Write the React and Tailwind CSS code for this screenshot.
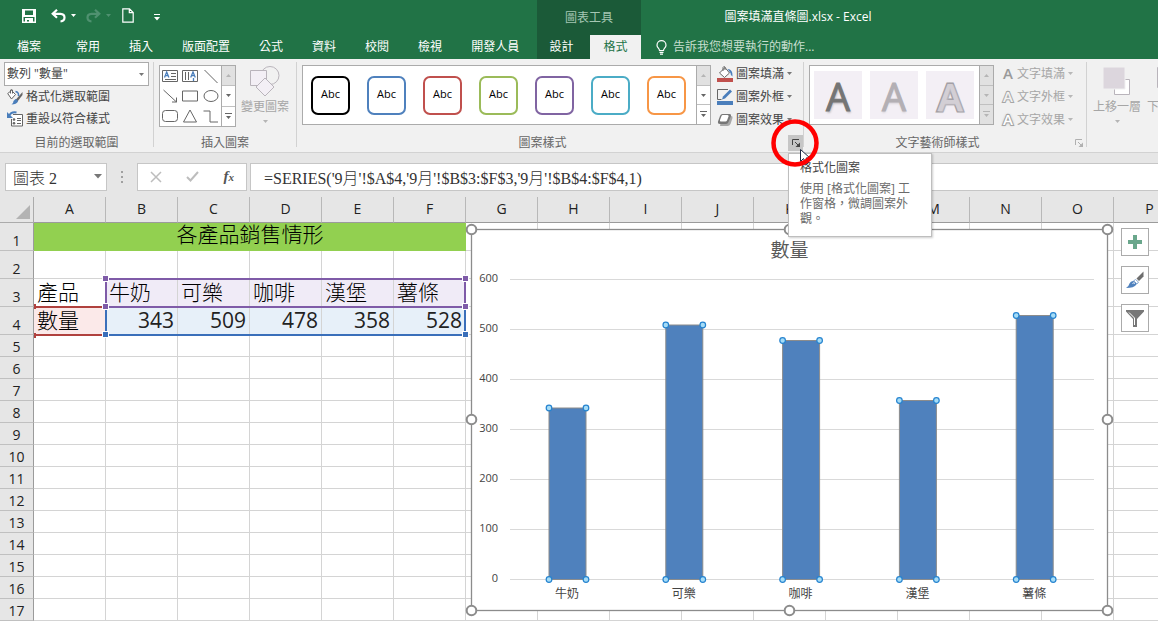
import { useState } from "react";

const TABS = ["常用", "插入", "版面配置", "公式", "資料", "校閱", "檢視", "開發人員"];
const COLUMNS = ["A", "B", "C", "D", "E", "F", "G", "H", "I", "J", "K", "L", "M", "N", "O", "P"];
const ROWS = Array.from({ length: 17 }, (_, i) => i + 1);

const DATA = [
  { name: "牛奶", value: 343 },
  { name: "可樂", value: 509 },
  { name: "咖啡", value: 478 },
  { name: "漢堡", value: 358 },
  { name: "薯條", value: 528 },
];

const SHAPE_STYLES = [
  "border-black",
  "border-[#4f81bd]",
  "border-[#c0504d]",
  "border-[#9bbb59]",
  "border-[#8064a2]",
  "border-[#4bacc6]",
  "border-[#f79646]",
];

const Caret = ({ className = "text-[#777]" }) => (
  <svg width="5" height="3" viewBox="0 0 5 3" className={`shrink-0 ${className}`}>
    <path d="M0 0h5L2.500 3z" fill="currentColor" />
  </svg>
);

const Separator = () => <div className="w-px shrink-0 mt-[3px] mb-[5px] bg-[#d2d2d2]" />;

/* ---------- Title bar and tabs ---------- */

const QuickAccess = () => (
  <div className="flex items-center h-[35px] pl-[22px] pb-1 text-white">
    <button aria-label="儲存檔案">
      <svg width="14" height="14" viewBox="0 0 14 14" fill="currentColor">
        <path d="M0 0h14v14H0z" />
        <path d="M3 1.500h8V6H3zM1.500 8h11v4.500h-11z" fill="#217346" />
        <path d="M3 9h8v4H7v-2H5v2H3z" />
      </svg>
    </button>
    <button aria-label="復原" className="flex items-center gap-[5px] ml-[15px]">
      <svg width="15" height="14" viewBox="0 0 15 14" fill="none" stroke="currentColor" strokeWidth="2.200">
        <path d="M6 .8 1.700 4.800 6 8.800M2 4.800h7.500Q13.500 5 13.500 8.500T9.500 12.500" />
      </svg>
      <Caret className="text-white" />
    </button>
    <button aria-label="取消復原" disabled className="flex items-center gap-[5px] ml-[10px] text-[#4f9170]">
      <svg width="15" height="14" viewBox="0 0 15 14" fill="none" stroke="currentColor" strokeWidth="2.200">
        <path d="m9 .8 4.300 4L9 8.800M13 4.800H5.500Q1.500 5 1.500 8.500T5.500 12.500" />
      </svg>
      <Caret className="text-[#4f9170]" />
    </button>
    <button aria-label="開新檔案" className="ml-[11px]">
      <svg width="12" height="15" viewBox="0 0 12 15" fill="none" stroke="currentColor" strokeWidth="1.200">
        <path d="M.8.8h6.700L11.200 4.500v9.700H.8zM7.300 1v3.700h3.700" />
      </svg>
    </button>
    <button aria-label="自訂快速存取工具列" className="ml-[20px] pt-1">
      <svg width="6" height="7" viewBox="0 0 6 7" fill="currentColor">
        <path d="M0 0h6v1H0zM0 3h6L3 6.500z" />
      </svg>
    </button>
  </div>
);

const TitleBar = () => (
  <header className="flex h-[59px] shrink-0 bg-[#217346] text-white text-[12px] leading-4">
    <div className="w-[537px] shrink-0">
      <QuickAccess />
      <nav className="flex items-center h-6 pl-[17px] whitespace-nowrap">
        <button className="mr-[35px]">檔案</button>
        <div className="flex gap-[29px]">
          {TABS.map((tab) => (
            <button key={tab}>{tab}</button>
          ))}
        </div>
      </nav>
    </div>
    <div className="flex flex-col w-[104px] shrink-0 bg-[#1b5a38]">
      <div className="flex items-center justify-center h-[35px] text-[#a5c7b3]">圖表工具</div>
      <div className="flex flex-1">
        <button className="w-[53px] pr-1 pb-px">設計</button>
        <button className="flex-1 pb-px bg-[#f1f1f1] text-[#217346]">格式</button>
      </div>
    </div>
    <div className="flex-1 min-w-0">
      <h1 className="h-[35px] pt-[9px] pr-[203px] text-center whitespace-nowrap">圖案填滿直條圖.xlsx - Excel</h1>
      <button className="flex items-center gap-[6px] h-6 pl-[15px] text-[#c8dfd0] whitespace-nowrap">
        <svg width="11" height="15" viewBox="0 0 11 15" fill="none" stroke="#fff" strokeWidth="1.2">
          <path d="M3.500 10.500C3.500 8.500 1 7.800 1 5.200a4.500 4.500 0 0 1 9 0c0 2.600-2.500 3.300-2.500 5.300zM3.500 12.300h4M4 14.200h3" />
        </svg>
        告訴我您想要執行的動作...
      </button>
    </div>
  </header>
);

/* ---------- Ribbon ---------- */

const Launcher = ({ className, label }) => (
  <button aria-label={label} className={`flex items-center justify-center w-[15px] h-4 shrink-0 ${className}`}>
    <svg width="8" height="8" viewBox="0 0 8 8" fill="none" stroke="currentColor">
      <path d="M.5 6V.5H7M3 3l3 3" />
      <path d="M8 3.500V8H3.500z" fill="currentColor" stroke="none" />
    </svg>
  </button>
);

const Group = ({ title, className = "", children, launcher }) => (
  <section className={`flex flex-col shrink-0 pt-[3px] ${className}`}>
    <div className="flex h-[73px]">{children}</div>
    <div className="flex h-4">
      <h2 className="flex-1 text-center text-[#666]">{title}</h2>
      {launcher}
    </div>
  </section>
);

const GalleryScroll = ({ disabled }) => {
  const off = "bg-[#e1e1e1] text-[#b5b5b5]";
  const on = disabled ? off : "bg-white text-[#666]";
  return (
    <div className="flex flex-col w-[14px] shrink-0 border-l border-[#ababab] divide-y divide-[#c0c0c0]">
      <button aria-label="上一列" disabled className={`flex flex-1 items-center justify-center ${off}`}>
        <svg width="5" height="3" viewBox="0 0 5 3"><path d="M0 3h5L2.500 0z" fill="currentColor" /></svg>
      </button>
      <button aria-label="下一列" disabled={disabled} className={`flex flex-1 items-center justify-center ${on}`}>
        <svg width="5" height="3" viewBox="0 0 5 3"><path d="M0 0h5L2.500 3z" fill="currentColor" /></svg>
      </button>
      <button aria-label="其他" disabled={disabled} className={`flex flex-1 items-center justify-center ${on}`}>
        <svg width="7" height="7" viewBox="0 0 7 7"><path d="M0 0h7v1H0zM1 3h5L3.500 6z" fill="currentColor" /></svg>
      </button>
    </div>
  );
};

const IconButton = ({ icon, children, caret, className = "", disabled }) => (
  <button disabled={disabled} className={`flex items-center gap-[3px] whitespace-nowrap ${className}`}>
    {icon}
    <span>{children}</span>
    {caret && <Caret className={disabled ? "text-[#b8b8b8]" : "text-[#777]"} />}
  </button>
);

const FormatSelectionIcon = () => (
  <svg width="16" height="16" viewBox="0 0 16 16" fill="none">
    <path d="M.7 4.500 4.500 1.500l4 4-4 4.500z" fill="#fff" stroke="#666" />
    <path d="M3.500 4.500V1Q4.500 0 5.500 1v3.500" stroke="#666" />
    <path d="M15.500 3 8.500 11l2 1.500L15.500 6z" fill="#666" />
    <path d="M8.500 10q2 0 2.500 2.500Q9.500 15.500 4.500 15.500 6.500 14 6.500 12z" fill="#4a7ebb" />
    <path d="M8.500 2.500Q12 3 11.500 7" stroke="#4a7ebb" strokeWidth="1.500" />
  </svg>
);

const ResetIcon = () => (
  <svg width="16" height="16" viewBox="0 0 16 16" fill="none">
    <path d="M6 3.500h9.500v11.500h-11V8" stroke="#666" fill="#fff" />
    <path d="M2 5Q4 .5 9.500 1.500" stroke="#4a7ebb" strokeWidth="2" />
    <path d="M0 1v6h6z" fill="#4a7ebb" />
    <circle cx="7" cy="8.500" r="1.300" fill="#666" />
    <circle cx="7" cy="12.300" r="1.300" fill="#666" />
    <path d="M10 7.500h4M10 9.500h4M10 12.500h4" stroke="#666" />
  </svg>
);

const SHAPE_ICONS = [
  { name: "文字方塊", draw: <><path d="M2.500 4.500h15v11h-15zM11 7.500h5M11 10.500h5M5 13.500h11" /><path d="M4.500 11.500 6.700 6l2.200 5.500M5.200 9.700h3" stroke="#4a7ebb" strokeWidth="1.300" /></> },
  { name: "垂直文字方塊", draw: <><path d="M2.500 4.500h15v11h-15zM5.500 6v8M8.500 6v8" /><path d="M10.700 11.500 13 6l2.300 5.500M11.500 9.700h3M13.500 12v3" stroke="#4a7ebb" strokeWidth="1.300" /></> },
  { name: "線條", draw: <path d="m3.500 4 13 13" /> },
  { name: "箭號", draw: <path d="m3.500 4 13 12M16.500 11.500V16H12" /> },
  { name: "矩形", draw: <path d="M2.500 5h15v10h-15z" /> },
  { name: "橢圓", draw: <ellipse cx="10" cy="10" rx="7" ry="5.500" /> },
  { name: "圓角矩形", draw: <rect x="2.500" y="4.500" width="15" height="11" rx="3" /> },
  { name: "三角形", draw: <path d="m10 4 6.500 12h-13z" /> },
  { name: "肘形接點", draw: <path d="M2.500 5H9v11h8" /> },
];

const FillIcon = () => (
  <svg width="16" height="16" viewBox="0 0 16 16" fill="none">
    <path d="M2.500 7 8 1.500l4.500 5.500L7.500 11.500z" fill="#fff" stroke="#666" />
    <path d="M6 5V1.500Q6.500 0 8 1v3" stroke="#666" />
    <path d="M10.500 3q5.500 0 5 7.500-2-.5-2-3.500z" fill="#4a7ebb" />
    <path d="M0 12h16v4H0z" fill="#c0504d" />
  </svg>
);

const OutlineIcon = () => (
  <svg width="16" height="16" viewBox="0 0 16 16" fill="none">
    <path d="M11 .5H.5v10h4" stroke="#666" />
    <path d="m5 10.500 1-3L13 .5 15 2.500l-7 7z" fill="#4a7ebb" />
    <path d="M0 12h16v4H0z" fill="#4a7ebb" />
  </svg>
);

const EffectsIcon = () => (
  <svg width="16" height="16" viewBox="0 0 16 16">
    <path d="M5 4h9q2 0 1.500 2L13.500 12q-1 2-3 2H3z" fill="#a8a8a8" />
    <path d="M5.500 2h7q2 0 1.500 2L11.500 10q-.7 2-2.500 2H3Q.5 12 1 9.500l2-5.500q.7-2 2.500-2z" fill="#777" />
    <path d="M5.800 3h4.700q1.500 0 1 1.500L10 8.500q-.5 1-1.500 1H4q-1.500 0-1-1.500L4.500 4q.4-1 1.300-1z" fill="#fff" />
  </svg>
);

const ScreenTip = () => (
  <div role="tooltip" className="absolute left-[491px] top-[94px] z-20 w-[144px] h-[84px] border border-[#bebebe] bg-white pl-[11px] pr-[18px] pt-[6px] shadow-[1px_1px_2px_rgba(0,0,0,0.2)]">
    <p className="text-[#444]">格式化圖案</p>
    <p className="mt-[5px] leading-[15px] text-[#6b6b6b]">使用 [格式化圖案] 工作窗格，微調圖案外觀。</p>
  </div>
);

const ClickMarker = () => (
  <svg width="50" height="50" viewBox="0 0 50 50" fill="none" className="absolute left-[473px] top-[59px] z-30 pointer-events-none">
    <path d="M30.500 31.500v12l3-3 2.500 5.500 2.500-1-2.500-5h4z" fill="#fff" stroke="#1f2a44" />
    <circle cx="25" cy="25" r="21.500" stroke="#f00" strokeWidth="4.500" />
  </svg>
);

const WordArtLetter = ({ className }) => (
  <span className={`w-3 text-center text-[15px] leading-4 font-semibold pb-[2px] ${className}`}>A</span>
);

const Ribbon = () => {
  const [element, setElement] = useState('數列 "數量"');

  return (
    <div className="flex h-[94px] shrink-0 border-b border-[#d2d2d2] bg-[#f1f1f1] text-[12px] leading-4 text-[#444]">
      <Group title="目前的選取範圍" className="w-[153px]">
        <div className="flex flex-col w-full px-1">
          <div className="flex items-center h-6 border border-[#ababab] bg-white pr-1">
            <select
              aria-label="圖表項目"
              value={element}
              onChange={(e) => setElement(e.target.value)}
              className="flex-1 min-w-0 appearance-none bg-transparent pl-[2px] outline-none"
            >
              <option>數列 "數量"</option>
            </select>
            <Caret />
          </div>
          <IconButton icon={<FormatSelectionIcon />} className="h-[22px] pl-[3px]">格式化選取範圍</IconButton>
          <IconButton icon={<ResetIcon />} className="h-[22px] pl-[3px]">重設以符合樣式</IconButton>
        </div>
      </Group>
      <Separator />

      <Group title="插入圖案" className="w-[142px]">
        <div className="flex mt-[3px] ml-[5px] w-[77px] h-[62px] border border-[#ababab] bg-white">
          <div className="grid grid-cols-3 flex-1">
            {SHAPE_ICONS.map((shape) => (
              <button key={shape.name} aria-label={shape.name}>
                <svg width="20" height="20" viewBox="0 0 20 20" fill="none" stroke="#666">{shape.draw}</svg>
              </button>
            ))}
          </div>
          <GalleryScroll />
        </div>
        <button disabled className="flex flex-1 flex-col items-center pt-1 pr-[2px] text-[#a6a6a6]">
          <svg width="30" height="31" viewBox="0 0 30 31" fill="#f3eff5" stroke="#b9b4bb">
            <circle cx="20" cy="9.500" r="9" fill="none" />
            <path d="M.5 4.500h16v15H.5z" />
            <path d="m15 12 9 9-9 9-9-9z" />
          </svg>
          <span className="mt-[2px]">變更圖案</span>
          <Caret className="mt-[5px] text-[#b5b5b5]" />
        </button>
      </Group>
      <Separator />

      <div className="relative flex shrink-0">
        <Group
          title="圖案樣式"
          className="w-[506px]"
          launcher={<Launcher label="格式化圖案" className="bg-[#c6c6c6] text-[#444]" />}
        >
          <div className="flex mt-[3px] ml-[5px] w-[409px] h-[60px] border border-[#ababab] bg-white">
            <div className="flex flex-1 items-center gap-[17px] pl-2">
              {SHAPE_STYLES.map((style) => (
                <button key={style} className={`size-[39px] shrink-0 rounded-[7px] border-2 bg-white pb-[2px] text-[11px] text-black ${style}`}>
                  Abc
                </button>
              ))}
            </div>
            <GalleryScroll />
          </div>
          <div className="ml-[6px] flex flex-col">
            <IconButton caret icon={<FillIcon />} className="h-[23px]">圖案填滿</IconButton>
            <IconButton caret icon={<OutlineIcon />} className="h-[23px]">圖案外框</IconButton>
            <IconButton caret icon={<EffectsIcon />} className="h-[23px]">圖案效果</IconButton>
          </div>
        </Group>
        <ScreenTip />
        <ClickMarker />
      </div>
      <Separator />

      <Group
        title="文字藝術師樣式"
        className="w-[282px]"
        launcher={<Launcher label="格式化文字效果" className="text-[#b0b0b0]" />}
      >
        <div className="flex mt-[3px] ml-[5px] w-[185px] h-[60px] border border-[#ababab] bg-white">
          <div className="flex flex-1 items-center gap-2 pl-1 text-[38px] leading-[50px]">
            <button disabled className="size-12 bg-[#f3eff5] text-[#757575] [-webkit-text-stroke:1px_#757575] [text-shadow:1px_2px_2px_#c4c0c6]">A</button>
            <button disabled className="size-12 bg-[#f3eff5] text-[#b3afb4] [-webkit-text-stroke:1px_#b3afb4] [text-shadow:0_2px_2px_#dcd8de]">A</button>
            <button disabled className="size-12 bg-[#f3eff5] font-semibold text-[#d3cfd5] [paint-order:stroke] [-webkit-text-stroke:3px_#a39fa5] [text-shadow:1px_1px_2px_#c4c0c6]">A</button>
          </div>
          <GalleryScroll disabled />
        </div>
        <div className="ml-[8px] flex flex-col text-[#a6a6a6]">
          <IconButton disabled caret icon={<WordArtLetter className="text-[#9a9a9a]" />} className="h-[23px]">文字填滿</IconButton>
          <IconButton disabled caret icon={<WordArtLetter className="text-[#f1f1f1] [paint-order:stroke] [-webkit-text-stroke:2px_#a6a6a6]" />} className="h-[23px]">文字外框</IconButton>
          <IconButton disabled caret icon={<WordArtLetter className="text-white [paint-order:stroke] [-webkit-text-stroke:2px_#a6a6a6] [text-shadow:0_0_3px_#999]" />} className="h-[23px]">文字效果</IconButton>
        </div>
      </Group>
      <Separator />

      <div className="flex flex-1 min-w-0 gap-[6px] overflow-hidden pl-[6px] pt-2 text-[#a6a6a6] whitespace-nowrap">
        <button disabled className="flex flex-col items-center w-12 shrink-0">
          <svg width="28" height="28" viewBox="0 0 28 28">
            <path d="M11.500 12.500h15v15h-15z" fill="#fff" stroke="#b9b4bb" />
            <path d="M0 0h22v22H0z" fill="#dcd6dd" stroke="#f1f1f1" />
          </svg>
          <span className="mt-1">上移一層</span>
          <Caret className="mt-[5px] text-[#b5b5b5]" />
        </button>
        <button disabled className="flex flex-col items-center w-12 shrink-0">
          <svg width="28" height="28" viewBox="0 0 28 28">
            <path d="M.5.500h20v20H.5z" fill="#dcd6dd" stroke="#b9b4bb" />
            <path d="M11.500 12.500h15v15h-15z" fill="#dcd6dd" />
          </svg>
          <span className="mt-1">下移一層</span>
          <Caret className="mt-[5px] text-[#b5b5b5]" />
        </button>
      </div>
    </div>
  );
};

/* ---------- Formula bar ---------- */

const FormulaBar = () => (
  <div className="flex items-center h-11 shrink-0 bg-[#e6e6e6] pl-[5px] pt-[3px] text-[16px] font-['Liberation_Serif','Noto_Sans_CJK_TC',serif] text-[#333]">
    <div className="flex items-center w-[102px] h-7 border border-[#c6c6c6] bg-white pr-1">
      <input aria-label="名稱方塊" defaultValue="圖表 2" className="flex-1 min-w-0 h-full bg-transparent pl-[7px] outline-none font-light" />
      <svg width="8" height="5" viewBox="0 0 8 5"><path d="M0 0h8L4 4.500z" fill="#777" /></svg>
    </div>
    <svg width="2" height="12" viewBox="0 0 2 12" fill="#a0a0a0" className="mx-[14px]">
      <path d="M0 0h2v2H0zM0 5h2v2H0zM0 10h2v2H0z" />
    </svg>
    <div className="flex items-center justify-around w-[110px] h-7 border border-[#c6c6c6] bg-white">
      <button aria-label="取消" disabled>
        <svg width="12" height="12" viewBox="0 0 12 12" stroke="#bdbdbd" strokeWidth="1.500"><path d="m1 1 10 10M11 1 1 11" /></svg>
      </button>
      <button aria-label="輸入" disabled>
        <svg width="13" height="11" viewBox="0 0 13 11" fill="none" stroke="#bdbdbd" strokeWidth="2"><path d="m1 6 3.500 3.500L12 1" /></svg>
      </button>
      <button aria-label="插入函數" className="flex items-baseline text-[15px] leading-none italic font-bold text-[#555]">
        f<span className="text-[11px]">x</span>
      </button>
    </div>
    <input
      aria-label="資料編輯列"
      defaultValue="=SERIES('9月'!$A$4,'9月'!$B$3:$F$3,'9月'!$B$4:$F$4,1)"
      className="flex-1 min-w-0 h-7 ml-[3px] border border-r-0 border-[#c6c6c6] bg-white pl-[13px] outline-none font-light"
    />
  </div>
);

/* ---------- Worksheet ---------- */

const cellFor = (row, column) => {
  const item = DATA[column - 1];
  if (row === 3) {
    if (column === 0) return { text: "產品" };
    if (item) return { text: item.name, style: "bg-[#f0ebf7] font-light" };
  }
  if (row === 4) {
    if (column === 0) return { text: "數量", style: "bg-[#fbe9e9] font-light" };
    if (item) return { text: item.value, style: "bg-[#e7f0f9] text-right font-normal text-[#222]" };
  }
  return {};
};

const Grid = () => (
  <table className="table-fixed w-[1186px] border-separate border-spacing-0 bg-white">
    <colgroup>
      <col className="w-[34px]" />
      {COLUMNS.map((c) => (
        <col key={c} className="w-[72px]" />
      ))}
    </colgroup>
    <thead>
      <tr className="h-[26px] bg-[#e6e6e6] text-[14px] leading-4 text-[#222]">
        <th className="border-r border-b border-[#ababab] p-0 align-bottom">
          <svg width="14" height="14" viewBox="0 0 14 14" className="ml-4 mb-[3px]"><path d="M14 0v14H0z" fill="#b3b3b3" /></svg>
        </th>
        {COLUMNS.map((c) => (
          <th key={c} scope="col" className="border-r border-b border-r-[#b8b8b8] border-b-[#9b9b9b] p-0 pb-[2px] font-normal">{c}</th>
        ))}
      </tr>
    </thead>
    <tbody className="text-[21px] leading-5 text-black font-light">
      {ROWS.map((row) => (
        <tr key={row} className={row < 5 ? "h-7" : "h-[22px]"}>
          <th scope="row" className="border-r border-b border-r-[#9b9b9b] border-b-[#c0c0c0] bg-[#e6e6e6] p-0 align-bottom text-[14px] leading-[18px] font-normal text-[#222]">
            {row}
          </th>
          {row === 1 && (
            <td colSpan="6" className="bg-[#92d050] p-0 pb-[6px] text-center">各產品銷售情形</td>
          )}
          {COLUMNS.map((c, i) => {
            if (row === 1 && i < 6) return null;
            const { text, style = "" } = cellFor(row, i);
            return (
              <td key={c} className={`border-r border-b border-[#d4d4d4] p-0 px-[3px] pb-[2px] ${style}`}>{text}</td>
            );
          })}
        </tr>
      ))}
    </tbody>
  </table>
);

const Handle = ({ className }) => <i className={`absolute size-[7px] border border-white ${className}`} />;

// Coloured outlines round the ranges the selected series refers to
const RangeOutlines = () => (
  <>
    <div className="absolute left-[34px] top-[109px] w-[70px] h-[30px] border-y-2 border-[#b0413e]">
      <i className="absolute left-0 -top-1 w-[2px] h-[5px] bg-[#b0413e]" />
      <i className="absolute left-0 -bottom-1 w-[2px] h-[5px] bg-[#b0413e]" />
    </div>
    <div className="absolute left-[105px] top-[109px] w-[361px] h-[30px] border-2 border-t-0 border-[#3a6fba]">
      <Handle className="-left-[5px] -bottom-[4px] bg-[#3a6fba]" />
      <Handle className="-right-[5px] -bottom-[4px] bg-[#3a6fba]" />
    </div>
    <div className="absolute left-[105px] top-[81px] w-[361px] h-[30px] border-2 border-[#7f5ba8]">
      <Handle className="-left-[5px] -top-[5px] bg-[#7f5ba8]" />
      <Handle className="-right-[5px] -top-[5px] bg-[#7f5ba8]" />
      <Handle className="-left-[5px] -bottom-[4px] bg-[#7f5ba8]" />
      <Handle className="-right-[5px] -bottom-[4px] bg-[#7f5ba8]" />
    </div>
  </>
);

const BASELINE = 356.5;

const Chart = () => (
  <svg width="650" height="396" viewBox="0 0 650 396" role="img" aria-label="數量" className="absolute left-[465px] top-[26px]">
    <rect x="6.500" y="6.500" width="636" height="381" fill="#fff" stroke="#8c8c8c" strokeWidth="1.300" />
    <text x="324.500" y="34" textAnchor="middle" className="fill-[#595959] text-[19px]">數量</text>
    {[0, 100, 200, 300, 400, 500, 600].map((tick) => (
      <g key={tick}>
        <path d={`M45 ${BASELINE - tick / 2}H629`} stroke="#d9d9d9" />
        <text x="33" y={BASELINE - tick / 2 + 2.5} textAnchor="end" className="fill-[#444] text-[11px]">{tick}</text>
      </g>
    ))}
    {DATA.map(({ name, value }, i) => {
      const center = 102.5 + i * 116.8;
      const top = BASELINE - value / 2;
      return (
        <g key={name}>
          <rect x={center - 18.5} y={top} width="37" height={value / 2} fill="#4f81bd" stroke="#8c8c8c" />
          {[center - 18.5, center + 18.5].map((x) =>
            [top, BASELINE].map((y) => (
              <circle key={`${x}-${y}`} cx={x} cy={y} r="2.800" fill="#a5dcf7" stroke="#2583cf" strokeWidth="1.200" />
            ))
          )}
          <text x={center - 0.5} y="375" textAnchor="middle" className="fill-[#444] text-[12px]">{name}</text>
        </g>
      );
    })}
    {[6.5, 324.5, 642.5].map((x) =>
      [6.5, 196.5, 387.5].map((y) =>
        x === 324.5 && y === 196.5 ? null : (
          <circle key={`${x}-${y}`} cx={x} cy={y} r="4.800" fill="#fff" stroke="#8c8c8c" strokeWidth="2" />
        )
      )
    )}
  </svg>
);

const ChartButtons = () => {
  const box = "flex items-center justify-center size-7 border border-[#ababab] bg-white";
  return (
    <div className="absolute left-[1121px] top-[31px] flex flex-col gap-[10px]">
      <button aria-label="圖表項目" className={box}>
        <svg width="14" height="14" viewBox="0 0 14 14"><path d="M5 0h4v5h5v4H9v5H5V9H0V5h5z" fill="#6aa78c" /></svg>
      </button>
      <button aria-label="圖表樣式" className={box}>
        <svg width="18" height="18" viewBox="0 0 18 18">
          <path d="M17.500.500v5L13 10l-2.500-2.500z" fill="#6e6e6e" />
          <path d="m9.500 8.500 3 2.500-1.500 2-3.500-3z" fill="#fff" stroke="#8aa9d0" />
          <path d="M7 10q3 .5 3.500 3.500Q8 17 0 17q3-2 3.500-4.500Q4.500 10 7 10z" fill="#4f81bd" />
          <path d="M6.500 12.500q1.500-1.500 2.500 0" fill="none" stroke="#fff" />
        </svg>
      </button>
      <button aria-label="圖表篩選" className={box}>
        <svg width="18" height="17" viewBox="0 0 18 17">
          <path d="M0 0h18v1.500L11 9v8H7V9L0 1.500z" fill="#777" />
          <path d="M3 2.500 8.500 8v7" fill="none" stroke="#fff" />
        </svg>
      </button>
    </div>
  );
};

const App = () => (
  <div className="flex flex-col h-screen overflow-hidden bg-white font-['Open_Sans','Noto_Sans_CJK_TC',sans-serif]">
    <TitleBar />
    <Ribbon />
    <FormulaBar />
    <main className="relative flex-1 min-h-0 overflow-hidden">
      <Grid />
      <RangeOutlines />
      <Chart />
      <ChartButtons />
    </main>
  </div>
);

export default App;
